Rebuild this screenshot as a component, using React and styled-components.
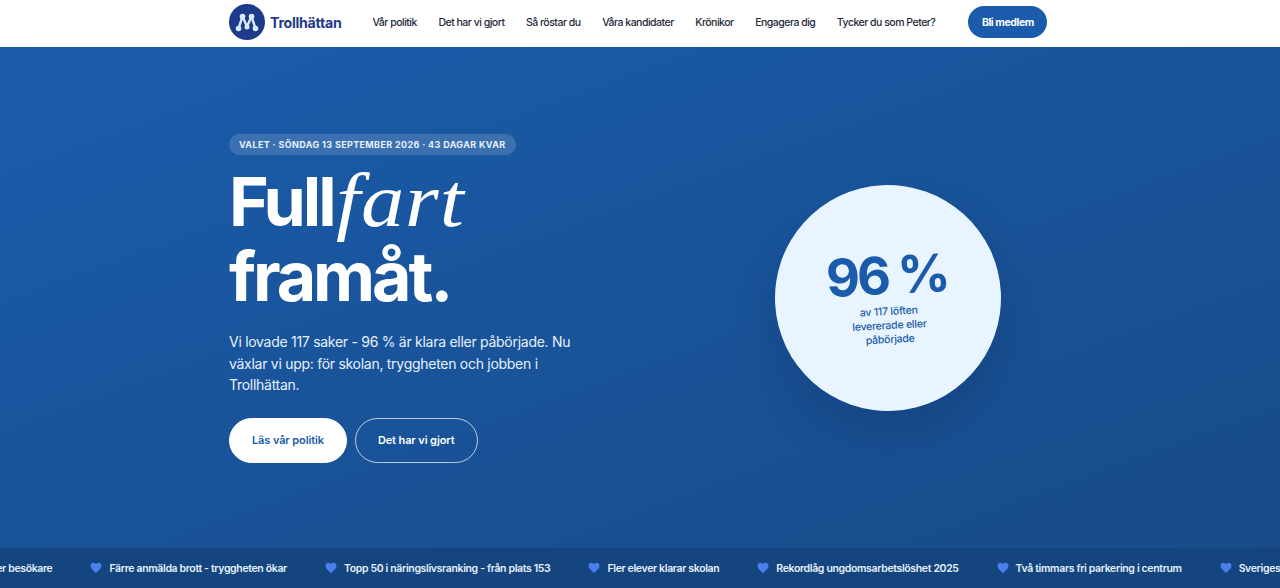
import React from 'react'
import styled, { createGlobalStyle } from 'styled-components'

const Global = createGlobalStyle`
  html, body {
    margin: 0;
    padding: 0;
    height: 100%;
    overflow: hidden;
    font-family: Inter, "Noto Sans", sans-serif;
  }
  #root { height: 100%; }
  * { box-sizing: border-box; }
`

const Page = styled.div`
  height: 588px;
  display: flex;
  flex-direction: column;
  overflow: hidden;
`

const Nav = styled.header`
  height: 47px;
  flex: none;
  background: #fff;
`

const NavInner = styled.div`
  width: 822px;
  height: 100%;
  margin: 0 auto;
  padding-bottom: 3px;
  display: flex;
  align-items: center;
`

const Brand = styled.a`
  display: flex;
  align-items: center;
  gap: 5px;
  margin-right: 31px;
  font-size: 14.2px;
  font-weight: 700;
  letter-spacing: -0.02em;
  color: #1e3a8a;
`

const Links = styled.nav`
  display: flex;
  gap: 21.5px;
  margin-right: 33px;
`

const Link = styled.a`
  font-size: 10.5px;
  font-weight: 500;
  letter-spacing: -0.5px;
  color: #1e293b;
  white-space: nowrap;
`

const JoinButton = styled.a`
  height: 32px;
  width: 79px;
  display: flex;
  align-items: center;
  justify-content: center;
  border-radius: 16px;
  background: #1a5cab;
  color: #fff;
  font-size: 10.5px;
  font-weight: 700;
  letter-spacing: -0.04em;
  white-space: nowrap;
`

const Hero = styled.section`
  flex: 1;
  display: flex;
  align-items: center;
  background: linear-gradient(160deg, #1a5cab 0%, #184b88 100%);
`

const HeroInner = styled.div`
  width: 822px;
  margin: 0 auto;
  display: grid;
  grid-template-columns: 1fr 326px;
  align-items: center;
`

const Copy = styled.div`
  padding-top: 2px;
  display: flex;
  flex-direction: column;
  align-items: flex-start;
`

const Badge = styled.div`
  height: 21px;
  padding: 0 10px;
  display: flex;
  align-items: center;
  border-radius: 11px;
  background: rgba(255, 255, 255, 0.15);
  color: #e6f0fb;
  font-size: 9px;
  font-weight: 700;
  letter-spacing: 0.04em;
  text-transform: uppercase;
  margin-bottom: 8px;
`

const Title = styled.h1`
  margin: 0 0 17px;
  font-size: 68px;
  line-height: 75px;
  font-weight: 700;
  letter-spacing: -0.045em;
  color: #fff;
`

const Serif = styled.em`
  display: inline-block;
  margin-left: -11px;
  font-family: "Liberation Serif", serif;
  font-size: 76px;
  line-height: 75px;
  font-weight: 400;
  font-style: italic;
  letter-spacing: 0.01em;
  transform: scaleX(1.14);
  transform-origin: left center;
`

const Lead = styled.p`
  margin: 0 0 22px;
  max-width: 350px;
  font-size: 14px;
  line-height: 21.5px;
  letter-spacing: -0.02em;
  color: #e6f0fb;
`

const Actions = styled.div`
  display: flex;
  gap: 8px;
`

const Action = styled.a`
  height: 45px;
  padding: 0 22px;
  display: flex;
  align-items: center;
  border-radius: 23px;
  font-size: 11px;
  font-weight: 600;
  letter-spacing: -0.01em;
  background: ${p => (p.$solid ? '#fff' : 'transparent')};
  color: ${p => (p.$solid ? '#1a5cab' : '#fff')};
  border: 1px solid ${p => (p.$solid ? '#fff' : 'rgba(255, 255, 255, 0.7)')};
`

const Circle = styled.div`
  width: 226px;
  height: 226px;
  justify-self: center;
  display: flex;
  flex-direction: column;
  align-items: center;
  justify-content: center;
  border-radius: 50%;
  background: #e8f4fe;
  color: #1a5cab;
  text-align: center;
  transform: rotate(-3deg);
  box-shadow: 0 20px 40px rgba(10, 40, 90, 0.25);
`

const Percent = styled.div`
  font-size: 52px;
  line-height: 54px;
  font-weight: 700;
  letter-spacing: -0.055em;
`

const PercentNote = styled.div`
  width: 90px;
  margin-top: 2px;
  font-size: 10.5px;
  line-height: 14px;
  font-weight: 500;
  letter-spacing: -0.02em;
`

const Ticker = styled.div`
  height: 40px;
  flex: none;
  display: flex;
  align-items: center;
  overflow: hidden;
  background: #15457f;
`

const Track = styled.div`
  display: flex;
  gap: 38px;
  margin-left: -31px;
  white-space: nowrap;
`

const TickerItem = styled.span`
  display: flex;
  align-items: center;
  gap: 7px;
  font-size: 10.5px;
  font-weight: 600;
  letter-spacing: -0.35px;
  color: #e6f0fb;
`

const Heart = () => (
  <svg width="12" height="12" viewBox="0 0 24 24" fill="#4a7fee">
    <path d="M12 22C8 18 1 13.5 1 7.5 1 3.8 3.8 1.5 6.8 1.5c2.2 0 4 1 5.2 3 1.2-2 3-3 5.2-3 3 0 5.8 2.3 5.8 6 0 6-7 10.500-11 14.500z" />
  </svg>
)

const Logo = () => (
  <svg width="36" height="36" viewBox="0 0 36 36">
    <circle cx="18" cy="18" r="18" fill="#1e3a8a" />
    <path
      d="M9.500 24.500 13.500 12.500 18 22.500 22.500 12.500 26.500 24.500"
      stroke="#d7ecfc"
      strokeWidth="2.400"
      fill="none"
      strokeLinejoin="round"
    />
    <g fill="#d7ecfc">
      <circle cx="13.500" cy="12.500" r="2.800" />
      <circle cx="22.500" cy="12.500" r="2.800" />
      <circle cx="18" cy="23" r="2.500" />
      <circle cx="9.500" cy="24.500" r="2.800" />
      <circle cx="26.500" cy="24.500" r="2.800" />
    </g>
  </svg>
)

const links = [
  'Vår politik',
  'Det har vi gjort',
  'Så röstar du',
  'Våra kandidater',
  'Krönikor',
  'Engagera dig',
  'Tycker du som Peter?',
]

const news = [
  'Fler besökare',
  'Färre anmälda brott - tryggheten ökar',
  'Topp 50 i näringslivsranking - från plats 153',
  'Fler elever klarar skolan',
  'Rekordlåg ungdomsarbetslöshet 2025',
  'Två timmars fri parkering i centrum',
  'Sveriges bästa',
]

export default function App() {
  return (
    <Page>
      <Global />
      <Nav>
        <NavInner>
          <Brand>
            <Logo />
            Trollhättan
          </Brand>
          <Links>
            {links.map(l => (
              <Link key={l}>{l}</Link>
            ))}
          </Links>
          <JoinButton>Bli medlem</JoinButton>
        </NavInner>
      </Nav>
      <Hero>
        <HeroInner>
          <Copy>
            <Badge>Valet · Söndag 13 september 2026 · 43 dagar kvar</Badge>
            <Title>
              Full <Serif>fart</Serif>
              <br />
              framåt.
            </Title>
            <Lead>
              Vi lovade 117 saker - 96 % är klara eller påbörjade. Nu växlar vi upp: för skolan,
              tryggheten och jobben i Trollhättan.
            </Lead>
            <Actions>
              <Action $solid>Läs vår politik</Action>
              <Action>Det har vi gjort</Action>
            </Actions>
          </Copy>
          <Circle>
            <Percent>96 %</Percent>
            <PercentNote>av 117 löften levererade eller påbörjade</PercentNote>
          </Circle>
        </HeroInner>
      </Hero>
      <Ticker>
        <Track>
          {news.map(n => (
            <TickerItem key={n}>
              <Heart />
              {n}
            </TickerItem>
          ))}
        </Track>
      </Ticker>
    </Page>
  )
}
